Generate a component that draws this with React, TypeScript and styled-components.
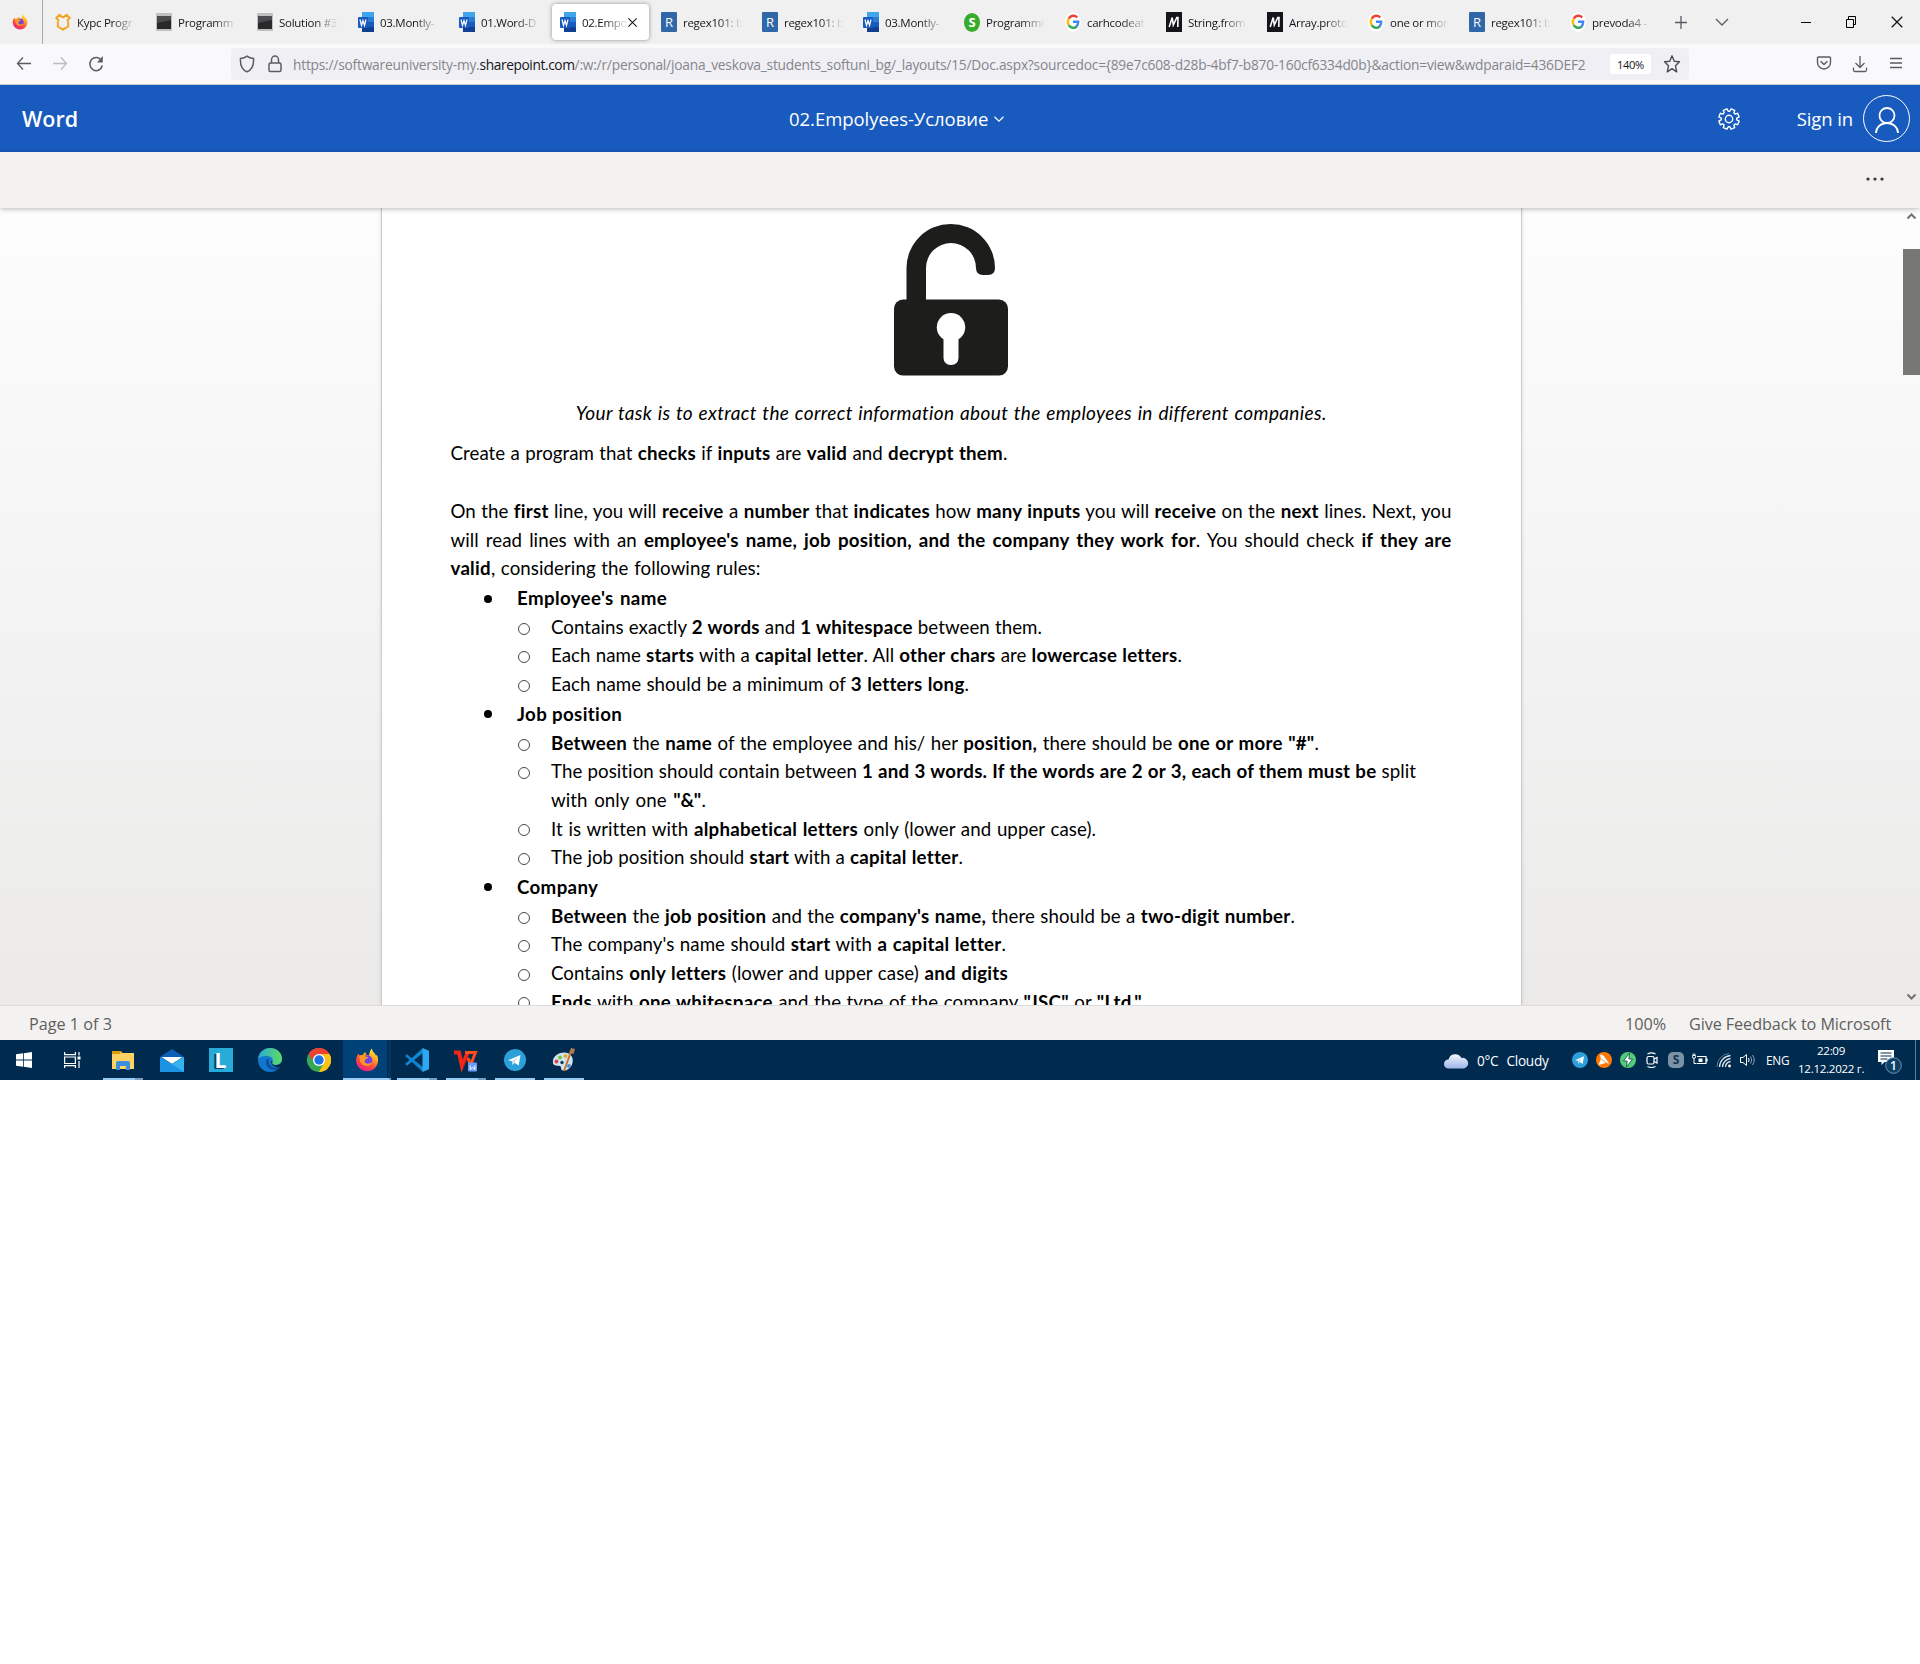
import React from "react";
import styled, { createGlobalStyle, css } from "styled-components";

const GlobalStyle = createGlobalStyle`
  * { box-sizing: border-box; }
  html, body { margin: 0; padding: 0; background: #fff; }
  body { font-family: "Open Sans", "Noto Sans", sans-serif; overflow: hidden; }
  svg { display: block; flex: none; }
`;

const ui = css`
  font-family: "Open Sans", "Noto Sans", sans-serif;
  white-space: nowrap;
`;

const Screen = styled.div`
  width: 1920px;
  height: 1664px;
  display: flex;
  flex-direction: column;
  background: #fff;
  overflow: hidden;
`;

/* ---------- browser chrome ---------- */

const TabStrip = styled.div`
  height: 44px;
  display: flex;
  align-items: center;
  background: #f0f0f0;
`;

const PinnedTab = styled.div`
  width: 43px;
  height: 44px;
  padding-left: 12px;
  margin-right: 2px;
  display: flex;
  align-items: center;
  border-right: 1px solid #a9a9aa;
`;

const Tab = styled.div<{ $active?: boolean }>`
  width: 97px;
  height: 36px;
  margin: 0 2px;
  padding-left: 8px;
  display: flex;
  align-items: center;
  gap: 6px;
  border-radius: 4px;
  background: ${(p) => (p.$active ? "#fff" : "transparent")};
  box-shadow: ${(p) => (p.$active ? "0 0 4px rgba(0, 0, 0, 0.4)" : "none")};
`;

const TabTitle = styled.div<{ $short?: boolean }>`
  ${ui}
  width: ${(p) => (p.$short ? 46 : 59)}px;
  flex: none;
  overflow: hidden;
  font-size: 11.5px;
  line-height: 20px;
  padding-top: 1px;
  letter-spacing: -0.27px;
  color: #15141a;
  mask-image: linear-gradient(to left, transparent 0, #000 24px);
`;

const CloseTab = styled.div`
  margin-left: -7px;
`;

const StripButtons = styled.div`
  display: flex;
  align-items: center;
  padding-left: 12px;
  gap: 25px;
`;

const WindowButtons = styled.div`
  margin-left: auto;
  padding-right: 16px;
  display: flex;
  align-items: center;
  gap: 33px;
`;

const NavBar = styled.div`
  height: 41px;
  display: flex;
  align-items: center;
  background: #f9f9fb;
  border-bottom: 1px solid #cccccc;
`;

const NavButtons = styled.div`
  width: 231px;
  padding-left: 16px;
  display: flex;
  gap: 20px;
`;

const UrlBar = styled.div`
  width: 1458px;
  height: 32px;
  padding: 0 8px;
  display: flex;
  align-items: center;
  border-radius: 4px;
  background: #f0f0f4;
`;

const UrlIcons = styled.div`
  width: 54px;
  display: flex;
  gap: 12px;
`;

const Url = styled.div`
  ${ui}
  width: 1319px;
  padding-top: 2px;
  font-size: 13.75px;
  line-height: 24px;
  letter-spacing: -0.213px;
  color: #85858c;
  b { font-weight: 400; color: #15141a; letter-spacing: -0.4px; }
`;

const ZoomBadge = styled.div`
  ${ui}
  width: 41px;
  height: 20px;
  margin-right: 12px;
  margin-left: -1px;
  border-radius: 3px;
  background: #fff;
  color: #15141a;
  font-size: 11.2px;
  line-height: 22px;
  letter-spacing: -0.4px;
  text-align: center;
`;

const NavTools = styled.div`
  margin-left: auto;
  padding-right: 16px;
  display: flex;
  gap: 20px;
`;

/* ---------- Word header ---------- */

const WordHeader = styled.header`
  height: 67px;
  display: grid;
  grid-template-columns: 789px auto 1fr;
  align-items: center;
  background: #185abd;
  color: #fff;
`;

const Brand = styled.div`
  ${ui}
  padding-left: 22px;
  font-size: 21.5px;
  font-weight: 600;
  line-height: 30px;
`;

const DocTitle = styled.div`
  ${ui}
  display: flex;
  align-items: center;
  gap: 5px;
  font-size: 18.5px;
  line-height: 30px;
  letter-spacing: -0.04px;
`;

const Account = styled.div`
  ${ui}
  display: flex;
  align-items: center;
  justify-content: flex-end;
  padding-right: 10px;
  font-size: 18.5px;
  line-height: 30px;
  letter-spacing: -0.1px;
`;

const GearSlot = styled.div`
  margin-right: 56px;
`;

const Avatar = styled.div`
  width: 47px;
  height: 47px;
  margin-left: 10px;
  display: flex;
  align-items: center;
  justify-content: center;
  border: 1px solid #fff;
  border-radius: 50%;
`;

const Ribbon = styled.div`
  height: 56px;
  display: flex;
  align-items: center;
  justify-content: flex-end;
  padding: 0 36px 2px 0;
  background: #f3f2f1;
  box-shadow: 0 1px 5px rgba(0, 0, 0, 0.28);
  z-index: 1;
`;

/* ---------- document ---------- */

const Canvas = styled.main`
  height: 797px;
  display: flex;
  background: linear-gradient(#fdfdfd, #ebeae9);
  overflow: hidden;
`;

const Page = styled.article`
  width: 1141px;
  margin-left: 381px;
  padding: 15px 69px 0 68.5px;
  flex: none;
  background: #fff;
  border: solid #c9cccf;
  border-width: 0 1px;
  box-shadow: 0 0 4px rgba(0, 0, 0, 0.12);
  overflow: hidden;
`;

const LockFigure = styled.div`
  display: flex;
  justify-content: center;
  margin-bottom: 22.5px;
`;

const Line = styled.div<{ $w: number; $top?: number; $center?: boolean; $head?: boolean }>`
  width: ${(p) => p.$w}px;
  margin: ${(p) => p.$top ?? 0}px ${(p) => (p.$center ? "auto" : "0")} 0;
  font-family: Lato, "Liberation Sans", sans-serif;
  font-size: ${(p) => (p.$center ? 19 : 18.7)}px;
  line-height: 28.6px;
  letter-spacing: ${(p) => (p.$center ? 0.36 : 0.06)}px;
  font-style: ${(p) => (p.$center ? "italic" : "normal")};
  font-variant-ligatures: none;
  text-align: justify;
  text-align-last: justify;
  white-space: nowrap;
  color: #000;
  b { font-weight: 700; letter-spacing: ${(p) => (p.$head ? 0.36 : 0.25)}px; }
`;

const HeadingRow = styled.div`
  display: flex;
  margin-top: 1.5px;
  padding-left: 33px;
`;

const ItemRow = styled.div`
  display: flex;
  padding-left: 67px;
`;

const Marker = styled.div<{ $solid?: boolean }>`
  width: 33.5px;
  height: 28.6px;
  display: flex;
  align-items: center;
  padding-left: ${(p) => (p.$solid ? 0.5 : 0)}px;
  padding-top: ${(p) => (p.$solid ? 0 : 3)}px;
  &::before {
    content: "";
    width: ${(p) => (p.$solid ? 8 : 10)}px;
    height: ${(p) => (p.$solid ? 8 : 10)}px;
    border-radius: 50%;
    border: ${(p) => (p.$solid ? "none" : "1px solid #484848")};
    background: ${(p) => (p.$solid ? "#000" : "transparent")};
  }
`;

const Scrollbar = styled.div`
  width: 17px;
  margin-left: auto;
  display: flex;
  flex-direction: column;
  align-items: center;
  justify-content: space-between;
  padding: 4px 0 4px;
`;

const Thumb = styled.div`
  width: 17px;
  height: 126px;
  margin-top: 29px;
  margin-bottom: auto;
  background: #777775;
`;

const StatusBar = styled.footer`
  ${ui}
  height: 35px;
  padding: 2px 29px 0;
  display: flex;
  align-items: center;
  gap: 24px;
  background: #f3f2f1;
  border-top: 1px solid #dddcdb;
  color: #605e5c;
  font-size: 16.2px;
  line-height: 30px;
`;

const StatusText = styled.span<{ $w: number; $track?: number }>`
  width: ${(p) => p.$w}px;
  letter-spacing: ${(p) => p.$track ?? 0}px;
  &:first-child { margin-right: auto; }
`;

/* ---------- taskbar ---------- */

const Taskbar = styled.div`
  ${ui}
  height: 40px;
  display: flex;
  background: #002b4f;
  color: #fff;
  font-size: 13.6px;
`;

const TaskButton = styled.div<{ $run?: boolean; $multi?: boolean; $active?: boolean }>`
  width: ${(p) => (p.$active ? 48 : 40)}px;
  height: 40px;
  margin: ${(p) => (p.$active ? "0 1px 0 0" : "0 4.5px")};
  display: flex;
  align-items: center;
  justify-content: center;
  background: ${(p) => (p.$active ? "linear-gradient(to right, #004178 44px, #00294a 44px, #00294a 45px, #00355f 45px)" : "none")};
  border-bottom: 2px solid transparent;
  border-image: ${(p) =>
    p.$run
      ? `linear-gradient(to right, #99ccf5 ${p.$multi ? (p.$active ? 44 : 31) : 48}px, #7c9fbe 0) 2`
      : "none"};
  padding-top: 2px;
`;

const StartButtons = styled.div`
  width: 98px;
  padding-left: 16px;
  display: flex;
  align-items: center;
  gap: 32px;
`;

const Tray = styled.div`
  margin-left: auto;
  display: flex;
  align-items: center;
`;

const Weather = styled.div`
  display: flex;
  align-items: center;
  gap: 8px;
  width: 128px;
  letter-spacing: -0.25px;
`;

const TrayIcons = styled.div`
  display: flex;
  align-items: center;
  gap: 8px;
  width: 194px;
`;

const Language = styled.div`
  width: 32px;
  font-size: 11.8px;
  letter-spacing: -0.2px;
`;

const Clock = styled.div`
  width: 66px;
  text-align: center;
  font-size: 11.6px;
  line-height: 18px;
  letter-spacing: -0.3px;
`;

const Notifications = styled.div`
  padding: 2px 13px 0 13px;
  height: 40px;
  display: flex;
  align-items: center;
  border-right: 1px solid #5d7d97;
  margin-right: 4px;
`;

/* ---------- drawings ---------- */

const FirefoxIcon = ({ size, id }: { size: number; id: string }) => (
  <svg width={size} height={size} viewBox="0 0 24 24">
    <defs>
      <linearGradient id={id} x1="0.8" y1="0" x2="0.25" y2="1">
        <stop offset="0" stopColor="#fff44f" />
        <stop offset="0.35" stopColor="#ffa51e" />
        <stop offset="0.65" stopColor="#ff4a3d" />
        <stop offset="1" stopColor="#e8188c" />
      </linearGradient>
    </defs>
    <path fill={`url(#${id})`} d="M3.5 5.5c.2 1 .6 1.600 1.200 2 1-.5 2.200-.5 3-.3.600-1.600 1.800-2.700 3.300-3.100-.4 1-.2 2 .3 2.700 1 0 2 .2 2.700.7.300-2.900 1.200-5.400 3-7 .2 2.200 1.200 3.400 2.500 4.800.8.900 1.300 1.700 1.500 2.500.4-.2.700-.6.800-1 1 2 1.500 4.200 1.200 6.700C22.300 19.200 17.700 23.200 12 23.200S1.500 18.800 1.100 13.300C.9 10.300 1.800 7.500 3.500 5.500Z" />
    <circle cx="12.300" cy="12.200" r="5" fill="#7542e5" />
    <path fill="#ff9a1f" d="M4.500 8c2.500-1.500 5-.8 6.300.8 1.200.2 2.400.1 2.400.7 0 .9-2.600 1.200-3.300 2.500-.9 1.700.4 3.600 2.700 3.700 2 .1 3.300-1 4.500-.9-1.200 2.500-4 3.500-6.500 3C6.500 17 4 13 4.500 8Z" />
  </svg>
);

const SoftUniIcon = () => (
  <svg width="16" height="18" viewBox="0 0 16 18" fill="none" stroke="#f7a11b" strokeWidth="1.900">
    <path d="M8 4.800L4.500 1.800 1.300 4.800 4 8.200M8 4.800l3.500-3 3.200 3L12 8.200M2.800 8.500v5L8 16.600l5.200-3.100v-5" />
  </svg>
);

const ConsoleIcon = () => (
  <svg width="16" height="18" viewBox="0 0 16 18">
    <rect width="16" height="18" rx="1" fill="#bfbfbf" />
    <rect x="1" y="3" width="14" height="13" fill="#29292b" />
    <path d="M1 3h14v4L1 10Z" fill="#4b4b4d" />
  </svg>
);

const WordIcon = () => (
  <svg width="16" height="20" viewBox="0 0 16 20">
    <rect x="4" y="0" width="12" height="5" fill="#41a5ee" />
    <rect x="4" y="5" width="12" height="5" fill="#2b7cd3" />
    <rect x="4" y="10" width="12" height="5" fill="#185abd" />
    <rect x="4" y="15" width="12" height="5" fill="#103f91" />
    <rect x="0" y="5" width="10" height="11" rx="1" fill="#185abd" />
    <path d="M2 7.500l1.500 6L5 8.500l1.500 5 1.500-6" fill="none" stroke="#fff" strokeWidth="1.200" />
  </svg>
);

const LetterTile = styled.div<{ $bg: string; $round?: boolean }>`
  width: 16px;
  height: ${(p) => (p.$round ? 19 : 20)}px;
  flex: none;
  display: flex;
  align-items: center;
  justify-content: center;
  border-radius: ${(p) => (p.$round ? "50%" : "1px")};
  background: ${(p) => p.$bg};
  color: #fff;
  font: ${(p) => (p.$round ? "700" : "400")} 13px/20px "Open Sans", sans-serif;
`;

const MdnIcon = () => (
  <svg width="16" height="20" viewBox="0 0 16 20">
    <rect width="16" height="20" fill="#15141a" />
    <path d="M3.200 15L6.200 5.500 7.300 13 10.800 5.500 12 5.500 11.800 15" fill="none" stroke="#fff" strokeWidth="1.600" />
  </svg>
);

const GoogleIcon = () => (
  <svg width="16" height="20" viewBox="0 0 16 20">
    <ellipse cx="8" cy="10" rx="8" ry="10" fill="#fff" />
    <g fill="none" strokeWidth="2.400">
      <path d="M12.200 5.500A5.500 6.200 0 0 0 3.700 6.600" stroke="#ea4335" />
      <path d="M3.700 6.600A6.500 6.500 0 0 0 3.700 13.200" stroke="#fbbc05" />
      <path d="M3.700 13.200a5.500 6 0 0 0 8 1.300" stroke="#34a853" />
      <path d="M8 9.800h5.200q0 3.200-1.900 5" stroke="#4285f4" />
    </g>
  </svg>
);

const stroke = { fill: "none", stroke: "currentColor" } as const;

const PlusIcon = () => (
  <svg width="16" height="16" viewBox="0 0 16 16" {...stroke} color="#5b5b66"><path d="M2 8.500h12M8 2v13" strokeWidth="1.300" /></svg>
);
const ChevronDown = ({ size, color, weight = 1.300 }: { size: number; color: string; weight?: number }) => (
  <svg width={size} height={size} viewBox="0 0 16 16" {...stroke} color={color}><path d="M2 5l6 6 6-6" strokeWidth={weight} /></svg>
);
const MinimizeIcon = () => (
  <svg width="12" height="14" {...stroke} color="#000"><path d="M1 7.500h10" /></svg>
);
const RestoreIcon = () => (
  <svg width="12" height="14" {...stroke} color="#000"><path d="M1.500 4.500h7v8h-7zM3.500 4.500v-3h7v8h-2" /></svg>
);
const CloseIcon = ({ size }: { size: number }) => (
  <svg width={size} height={size} viewBox="0 0 12 12" {...stroke} color="#111"><path d="M1.500 1.500l9 9M10.500 1.500l-9 9" strokeWidth="1.100" /></svg>
);
const BackIcon = () => (
  <svg width="16" height="16" viewBox="0 0 16 16" {...stroke} color="#5b5b66"><path d="M15 8.500H1.500M7 2.500L1.500 8.500 7 14.500" strokeWidth="1.300" /></svg>
);
const ForwardIcon = () => (
  <svg width="16" height="16" viewBox="0 0 16 16" {...stroke} color="#bcbcc2"><path d="M1 8.500h13.500M9 2.500l5.500 6L9 14.500" strokeWidth="1.300" /></svg>
);
const ReloadIcon = () => (
  <svg width="16" height="18" viewBox="0 0 16 18" {...stroke} color="#5b5b66">
    <path d="M13.500 5.500A6.300 6.600 0 1 0 14.300 10.500" strokeWidth="1.500" /><path d="M14.800 1v6.500H9Z" fill="currentColor" stroke="none" />
  </svg>
);
const ShieldIcon = () => (
  <svg width="16" height="18" viewBox="0 0 16 18" {...stroke} color="#5b5b66"><path d="M8 1.200C6 2.800 3.800 3.300 1.500 3.500 1 10 3.500 15 8 16.800 12.500 15 15 10 14.500 3.500 12.200 3.300 10 2.800 8 1.200Z" strokeWidth="1.500" /></svg>
);
const PadlockIcon = () => (
  <svg width="16" height="18" viewBox="0 0 16 18" {...stroke} color="#5b5b66"><rect x="2" y="8" width="12" height="8.500" rx="1.500" strokeWidth="1.500" /><path d="M4.500 8V5a3.500 4 0 0 1 7 0v3" strokeWidth="1.500" /></svg>
);
const StarIcon = () => (
  <svg width="18" height="20" viewBox="0 0 18 20" {...stroke} color="#4b4b55"><path d="M9 1.800l2.200 5.400 5.300.5-4 4.100 1.200 6L9 14.700l-4.700 3.100 1.200-6-4-4.100 5.300-.5Z" strokeWidth="1.400" strokeLinejoin="round" /></svg>
);
const PocketIcon = () => (
  <svg width="16" height="16" viewBox="0 0 16 16" {...stroke} color="#5b5b66"><path d="M2.500 2h11q1 0 1 1v4.500a6.500 6.500 0 0 1-13 0V3q0-1 1-1Z" strokeWidth="1.400" /><path d="M4.500 6.200L8 9.500l3.500-3.300" strokeWidth="1.500" /></svg>
);
const DownloadIcon = () => (
  <svg width="16" height="18" viewBox="0 0 16 18" {...stroke} color="#5b5b66"><path d="M8 1v11.500M3.500 8L8 12.500 12.500 8M1.500 12.500v2.500q0 1.500 1.500 1.500h10q1.500 0 1.500-1.500v-2.500" strokeWidth="1.300" /></svg>
);
const MenuIcon = () => (
  <svg width="16" height="16" viewBox="0 0 16 16" {...stroke} color="#5b5b66"><path d="M2 3.500h12M2 8h12M2 12.500h12" strokeWidth="1.300" /></svg>
);

const gearPath = (() => {
  const pts: string[] = [];
  for (let i = 0; i < 8; i++) {
    const a = (i * Math.PI) / 4 - Math.PI / 2 + Math.PI / 8;
    [[-0.29, 7.8], [-0.19, 10.4], [0.19, 10.4], [0.29, 7.8]].forEach(([d, r]) => {
      pts.push(`${(12 + r * Math.cos(a + d)).toFixed(2)} ${(12 + r * Math.sin(a + d)).toFixed(2)}`);
    });
  }
  return `M${pts.join("L")}Z`;
})();

const GearIcon = () => (
  <svg width="24" height="24" viewBox="0 0 24 24" {...stroke} strokeWidth="1.400" strokeLinejoin="round"><path d={gearPath} /><circle cx="12" cy="12" r="3.700" /></svg>
);
const PersonIcon = () => (
  <svg width="26" height="28" viewBox="0 0 26 28" {...stroke} strokeWidth="1.800"><circle cx="13" cy="10.500" r="7.500" /><path d="M2 28a11 10 0 0 1 22 0" /></svg>
);
const DotsIcon = () => (
  <svg width="18" height="6" viewBox="0 0 18 6" fill="#333"><circle cx="2" cy="3" r="1.600" /><circle cx="9" cy="3" r="1.600" /><circle cx="16" cy="3" r="1.600" /></svg>
);
const ScrollArrow = ({ up }: { up?: boolean }) => (
  <svg width="11" height="8" viewBox="0 0 11 8" fill="none" stroke="#72716f" strokeWidth="2"><path d={up ? "M1.500 6.500L5.500 2.500 9.500 6.500" : "M1.500 1.500L5.500 5.500 9.500 1.500"} /></svg>
);

const LockDrawing = () => (
  <svg width="116" height="153" viewBox="0 0 116 153" fill="#1d1d1b">
    <rect x="1" y="76.600" width="114" height="76" rx="9" />
    <path d="M13.500 80V45a44.250 44 0 0 1 88.500 0v0q0 7-7 7h-5q-7 0-7-7a25 25 0 0 0-50 0V80Z" />
    <circle cx="58" cy="104.300" r="14.200" fill="#fff" />
    <rect x="50.500" y="108.500" width="15" height="33.500" rx="7" fill="#fff" />
  </svg>
);

const WindowsIcon = () => (
  <svg width="16" height="16" viewBox="0 0 16 16" fill="#fff"><path d="M0 2.300L7 1.300V7.600H0ZM7.800 1.200L16 0v7.600H7.800ZM0 8.400h7v6.300L0 13.700ZM7.800 8.400H16V16l-8.200-1.200Z" /></svg>
);
const TaskViewIcon = () => (
  <svg width="17" height="16" viewBox="0 0 17 16" {...stroke} color="#fff" strokeWidth="1.200"><path d="M.6 0v2.600h10.800V0M.6 5h10.800v6.500H.6zM.6 16v-2.400h10.800V16M15 0v3.500M15 9v7" /><path d="M13.500 4.500h3v3h-3z" fill="#fff" stroke="none" /></svg>
);
const FolderIcon = () => (
  <svg width="22" height="19" viewBox="0 0 22 19"><path d="M0 0h9l1.500 2H0Z" fill="#d99a0b" /><path d="M0 1h9l1.500 1H22v16H0Z" fill="#ffd263" /><path d="M0 0h8.500v3H0Z" fill="#dc9d0a" /><path d="M4 19v-7q0-2 2-2h10q2 0 2 2v7h-4v-4H8v4Z" fill="#3b8fdd" /></svg>
);
const MailIcon = () => (
  <svg width="24" height="23" viewBox="0 0 24 23"><path d="M0 8L12 0l12 8-4 4H4Z" fill="#0a5eb8" /><path d="M1.500 8h21L12 15Z" fill="#fff" /><path d="M0 8l12 7 12-7v15H0Z" fill="#1c93e3" /><path d="M24 8v15L6 11.500l6 3.500Z" fill="#34b3f0" /></svg>
);
const LTile = styled.div`
  width: 24px;
  height: 24px;
  display: flex;
  align-items: center;
  justify-content: center;
  background: #27acd9;
  color: #fff;
  text-shadow: -2px 1px 0 #14395f;
  font: 700 21px/24px "Open Sans", sans-serif;
`;
const EdgeIcon = () => (
  <svg width="24" height="24" viewBox="0 0 24 24">
    <defs><linearGradient id="edgeTop" x1="0" x2="1"><stop offset="0" stopColor="#2aa8dc" /><stop offset="1" stopColor="#5fdc60" /></linearGradient></defs>
    <circle cx="12" cy="12" r="12" fill="#1277cc" />
    <path d="M0 11C1 4 6 0 12 0c7 0 12 5 12 10.500 0 4-3 6.500-6.500 6.500-3 0-4.500-1.200-3.500-2.500 2.500-3-1-7-6-6.500C4 8.200 1 9 0 11Z" fill="url(#edgeTop)" />
    <path d="M9 11c-3 5 1 11 8 11 2 0 4-1 5.500-3-2 .8-4 1-6 .5C12 18.500 10 15 11 11.500Z" fill="#0b4fa0" />
    <path d="M14.500 14.500c-1 1.300.5 2.500 3.500 2.500 3 0 5-1.500 6-3.500V19c-5 1.500-11-.5-11-6 1 0 1.500.7 1.500 1.500Z" fill="#002b4f" />
  </svg>
);
const ChromeIcon = () => (
  <svg width="24" height="24" viewBox="0 0 24 24">
    <path d="M12 12L1.600 6A12 12 0 0 1 22.400 6Z" fill="#ea4335" /><path d="M12 12L22.400 6A12 12 0 0 1 12 24Z" fill="#fbc116" /><path d="M12 12v12A12 12 0 0 1 1.600 6Z" fill="#34a853" />
    <path d="M12 6h10.400L17 15Z" fill="#fbc116" /><path d="M6.800 15L1.600 6 12 6Z" fill="#34a853" /><path d="M1.600 6A12 12 0 0 1 22.400 6H12L7 9.500 5 12Z" fill="#ea4335" /><path d="M17.200 15L12 24l-5-9Z" fill="#34a853" /><path d="M17.200 15L12 24A12 12 0 0 0 22.400 6H17Z" fill="#fbc116" />
    <circle cx="12" cy="12" r="6" fill="#fff" /><circle cx="12" cy="12" r="4.700" fill="#1a73e8" />
  </svg>
);
const VsCodeIcon = () => (
  <svg width="24" height="24" viewBox="0 0 24 24"><path d="M0 8l2-1.800L18 19v5Z" fill="#0f7fca" /><path d="M0 16l2 1.800L18 5V0Z" fill="#0f88d2" /><path d="M17.500 0L24 2.800v18.400L17.500 24Z" fill="#2ea8f3" /></svg>
);
const WpsIcon = () => (
  <svg width="24" height="24" viewBox="0 0 24 24" fill="none">
    <path d="M0 4.500h5L8 18 13.500 5" stroke="#f3261a" strokeWidth="4" />
    <path d="M11 4.500h10.500L16.500 17l-2.500-7" stroke="#ff4d1c" strokeWidth="3" />
    <path d="M9 19l4-9.500" stroke="#c51b10" strokeWidth="1" />
    <rect x="14" y="14.500" width="9" height="9" rx="1" fill="#6a9cf8" /><path d="M16.200 17.500v4l2.300-2 2.300 2v-4" stroke="#fff" />
  </svg>
);
const TelegramIcon = ({ size }: { size: number }) => (
  <svg width={size} height={size} viewBox="0 0 24 24"><circle cx="12" cy="12" r="12" fill="#2ca0da" /><path d="M4.500 12.200L18 6.500 16 18l-4.500-3-2 2.500-.7-4.200Z" fill="#fff" /><path d="M8.800 13.300L15 9l-4 5.500-1.500 3Z" fill="#b8d8ea" /></svg>
);
const PaintIcon = () => (
  <svg width="24" height="24" viewBox="0 0 24 24"><path d="M1 15C0 9 6 4.500 12 4.500S22 9 20.500 15 14 23 11 22.500c-3-.5-1-3.500-3-4.500S2 19 1 15Z" fill="#cfe4f3" /><circle cx="4.500" cy="13.500" r="1.900" fill="#e0413a" /><circle cx="8" cy="9.500" r="1.900" fill="#76c33b" /><circle cx="13.500" cy="8" r="1.900" fill="#eea52c" /><circle cx="10" cy="14.500" r="1.700" fill="#14395f" /><circle cx="17" cy="18" r="2" fill="#4c8fd3" /><path d="M12 23l6.500-18" stroke="#c9752c" strokeWidth="2" /><path d="M17 5l2-5 4 1-1.500 5Z" fill="#b07b4c" /></svg>
);
const CloudIcon = () => (
  <svg width="25" height="17" viewBox="0 0 25 17">
    <defs><linearGradient id="cloudFill" x2="0" y2="1"><stop offset="0" stopColor="#f2f5fd" /><stop offset="1" stopColor="#9eb6ea" /></linearGradient></defs>
    <path d="M4.500 16.500a4.500 4.500 0 0 1 0-9A7 7 0 0 1 17.500 6 5.300 5.300 0 0 1 20 16.500Z" fill="url(#cloudFill)" />
  </svg>
);
const AvastIcon = () => (
  <svg width="16" height="16" viewBox="0 0 16 16"><circle cx="8" cy="8" r="8" fill="#ff7800" /><path d="M4.200 2.500q2-.5 4 2L13.500 12q-3-2-5.500-.5L2.500 13 4.800 7Z" fill="#fff" /><path d="M5 7l7 5" stroke="#ff9b40" /></svg>
);
const BoltIcon = () => (
  <svg width="16" height="16" viewBox="0 0 16 16"><circle cx="8" cy="8" r="8" fill="#4fce75" /><path d="M9.500 1L3.500 9h3.700L6.500 15 12.500 7H8.800Z" fill="#fff" stroke="#173f55" strokeWidth=".8" /></svg>
);
const CameraIcon = () => (
  <svg width="16" height="16" viewBox="0 0 16 16" {...stroke} color="#fff" strokeWidth="1.200"><rect x="3" y="4.500" width="7" height="7.500" rx="1.500" /><path d="M10 7l3-1.500v5.500l-3-1.500M3.500 2Q7.500-.2 11.500 2M3.500 14.500q4 2 8 0" /></svg>
);
const SkypeTile = styled.div`
  width: 16px;
  height: 16px;
  border-radius: 5px;
  background: #7b93a7;
  color: #17334c;
  font: 700 12px/16px "Open Sans", sans-serif;
  text-align: center;
`;
const BatteryIcon = () => (
  <svg width="16" height="16" viewBox="0 0 16 16" {...stroke} color="#fff"><path d="M5 4.500h9v7H4.500M15 6.500v3" strokeWidth="1.200" /><path d="M6.500 6.500h4v3.500h-4z" fill="#fff" stroke="none" /><path d="M.5 3.500v1q0 2 1.500 2t1.500-2v-1ZM2 6.500v5h2M1.200 1.500v2M2.800 1.500v2" /></svg>
);
const WifiIcon = () => (
  <svg width="16" height="16" viewBox="0 0 16 16" {...stroke} color="#dfe6ec"><path d="M3.500 15A12 12 0 0 1 14.500 3.500M6.500 15a9 9 0 0 1 8-8.500M9.500 15a6 6 0 0 1 5-5.500" strokeWidth="1.300" /><path d="M1 15A13 13 0 0 1 13 1.500" stroke="#5b7a94" /><circle cx="13.500" cy="14" r="1.400" fill="#fff" stroke="none" /></svg>
);
const VolumeIcon = () => (
  <svg width="16" height="16" viewBox="0 0 16 16" {...stroke} color="#fff"><path d="M.5 5.500H3L6.500 2.500v11L3 10.500H.5Z" /><path d="M8.500 6q1 2 0 4" /><path d="M10.500 4.500q2.500 3.500 0 7M12.500 3q3.500 5 0 10" stroke="#8da3b5" /></svg>
);
const NoticeIcon = () => (
  <svg width="25" height="25" viewBox="0 0 25 25"><path d="M1 1h16v12H7.500L4.500 16v-3H1Z" fill="#fff" /><path d="M3.500 4h11M3.500 7h11M3.500 10h7" stroke="#002b4f" /><circle cx="16.500" cy="16.500" r="7.800" fill="#0d4268" stroke="#6a93b0" /><text x="16.500" y="21" fill="#fff" fontSize="12" fontFamily="Open Sans, sans-serif" fontWeight="600" textAnchor="middle">1</text></svg>
);

/* ---------- content ---------- */

const tabIcons: Record<string, React.ReactNode> = {
  softuni: <SoftUniIcon />,
  console: <ConsoleIcon />,
  word: <WordIcon />,
  regex: <LetterTile $bg="#3067a8">R</LetterTile>,
  s: <LetterTile $bg="#37ab2a" $round>S</LetterTile>,
  google: <GoogleIcon />,
  mdn: <MdnIcon />,
};

const tabs: { icon: string; title: string; active?: boolean }[] = [
  { icon: "softuni", title: "Курс Progr" },
  { icon: "console", title: "Programm" },
  { icon: "console", title: "Solution #3" },
  { icon: "word", title: "03.Montly-" },
  { icon: "word", title: "01.Word-D" },
  { icon: "word", title: "02.Empo", active: true },
  { icon: "regex", title: "regex101: b" },
  { icon: "regex", title: "regex101: b" },
  { icon: "word", title: "03.Montly-" },
  { icon: "s", title: "Programmi" },
  { icon: "google", title: "carhcodeat" },
  { icon: "mdn", title: "String.from" },
  { icon: "mdn", title: "Array.proto" },
  { icon: "google", title: "one or mor" },
  { icon: "regex", title: "regex101: b" },
  { icon: "google", title: "prevoda4 -" },
];

type Entry = { kind: "text" | "head" | "item" | "cont"; text: string; w: number };

const entries: Entry[] = [
  { kind: "text", w: 1001, text: "On the **first** line, you will **receive** a **number** that **indicates** how **many inputs** you will **receive** on the **next** lines. Next, you" },
  { kind: "text", w: 1001, text: "will read lines with an **employee's name, job position, and the company they work for**. You should check **if they are**" },
  { kind: "text", w: 310, text: "**valid**, considering the following rules:" },
  { kind: "head", w: 150, text: "**Employee's name**" },
  { kind: "item", w: 491, text: "Contains exactly **2 words** and **1 whitespace** between them." },
  { kind: "item", w: 631, text: "Each name **starts** with a **capital letter**. All **other chars** are **lowercase letters**." },
  { kind: "item", w: 418, text: "Each name should be a minimum of **3 letters long**." },
  { kind: "head", w: 103, text: "**Job position**" },
  { kind: "item", w: 768, text: "**Between** the **name** of the employee and his/ her **position,** there should be **one or more \"#\"**." },
  { kind: "item", w: 865, text: "The position should contain between **1 and 3 words. If the words are 2 or 3, each of them must be** split" },
  { kind: "cont", w: 155, text: "with only one **\"&\"**." },
  { kind: "item", w: 545, text: "It is written with **alphabetical letters** only (lower and upper case)." },
  { kind: "item", w: 412, text: "The job position should **start** with a **capital letter**." },
  { kind: "head", w: 81, text: "**Company**" },
  { kind: "item", w: 744, text: "**Between** the **job position** and the **company's name,** there should be a **two-digit number**." },
  { kind: "item", w: 455, text: "The company's name should **start** with **a capital letter**." },
  { kind: "item", w: 457, text: "Contains **only letters** (lower and upper case) **and digits**" },
  { kind: "item", w: 591, text: "**Ends** with **one whitespace** and the type of the company **\"JSC\"** or **\"Ltd.\"**" },
];

const rich = (text: string) =>
  text.split("**").map((part, i) => (i % 2 ? <b key={i}>{part}</b> : <React.Fragment key={i}>{part}</React.Fragment>));

const ContinuationSpace = styled.div`
  width: 33.5px;
`;

const EntryLine = ({ entry }: { entry: Entry }) => {
  const line = <Line $w={entry.w} $head={entry.kind === "head"}>{rich(entry.text)}</Line>;
  if (entry.kind === "text") return line;
  if (entry.kind === "head") return <HeadingRow><Marker $solid />{line}</HeadingRow>;
  return <ItemRow>{entry.kind === "item" ? <Marker /> : <ContinuationSpace />}{line}</ItemRow>;
};

export default function App() {
  return (
    <>
      <GlobalStyle />
      <Screen>
        <TabStrip>
          <PinnedTab><FirefoxIcon size={16} id="foxTab" /></PinnedTab>
          {tabs.map((t, i) => (
            <Tab key={i} $active={t.active}>
              {tabIcons[t.icon]}
              <TabTitle $short={t.active}>{t.title}</TabTitle>
              {t.active && <CloseTab><CloseIcon size={11} /></CloseTab>}
            </Tab>
          ))}
          <StripButtons><PlusIcon /><ChevronDown size={16} color="#5b5b66" /></StripButtons>
          <WindowButtons><MinimizeIcon /><RestoreIcon /><CloseIcon size={14} /></WindowButtons>
        </TabStrip>

        <NavBar>
          <NavButtons><BackIcon /><ForwardIcon /><ReloadIcon /></NavButtons>
          <UrlBar>
            <UrlIcons><ShieldIcon /><PadlockIcon /></UrlIcons>
            <Url>https://softwareuniversity-my.<b>sharepoint.com</b>/:w:/r/personal/joana_veskova_students_softuni_bg/_layouts/15/Doc.aspx?sourcedoc=&#123;89e7c608-d28b-4bf7-b870-160cf6334d0b&#125;&amp;action=view&amp;wdparaid=436DEF2</Url>
            <ZoomBadge>140%</ZoomBadge>
            <StarIcon />
          </UrlBar>
          <NavTools><PocketIcon /><DownloadIcon /><MenuIcon /></NavTools>
        </NavBar>

        <WordHeader>
          <Brand>Word</Brand>
          <DocTitle>02.Empolyees-Условие<ChevronDown size={12} color="#fff" weight={1.6} /></DocTitle>
          <Account><GearSlot><GearIcon /></GearSlot>Sign in<Avatar><PersonIcon /></Avatar></Account>
        </WordHeader>
        <Ribbon><DotsIcon /></Ribbon>

        <Canvas>
          <Page>
            <LockFigure><LockDrawing /></LockFigure>
            <Line $w={751} $center>Your task is to extract the correct information about the employees in different companies.</Line>
            <Line $w={557} $top={12}>{rich("Create a program that **checks** if **inputs** are **valid** and **decrypt them**.")}</Line>
            <Line $w={10} $top={0.7}>&nbsp;</Line>
            {entries.map((e, i) => <EntryLine key={i} entry={e} />)}
          </Page>
          <Scrollbar><ScrollArrow up /><Thumb /><ScrollArrow /></Scrollbar>
        </Canvas>

        <StatusBar>
          <StatusText $w={84}>Page 1 of 3</StatusText>
          <StatusText $w={40}>100%</StatusText>
          <StatusText $w={202} $track={-0.08}>Give Feedback to Microsoft</StatusText>
        </StatusBar>

        <Taskbar>
          <StartButtons><WindowsIcon /><TaskViewIcon /></StartButtons>
          <TaskButton $run $multi><FolderIcon /></TaskButton>
          <TaskButton><MailIcon /></TaskButton>
          <TaskButton><LTile>L</LTile></TaskButton>
          <TaskButton><EdgeIcon /></TaskButton>
          <TaskButton><ChromeIcon /></TaskButton>
          <TaskButton $run $multi $active><FirefoxIcon size={24} id="foxTask" /></TaskButton>
          <TaskButton $run $multi><VsCodeIcon /></TaskButton>
          <TaskButton $run $multi><WpsIcon /></TaskButton>
          <TaskButton $run><TelegramIcon size={22} /></TaskButton>
          <TaskButton $run><PaintIcon /></TaskButton>
          <Tray>
            <Weather><CloudIcon /><span>0°C</span><span>Cloudy</span></Weather>
            <TrayIcons>
              <TelegramIcon size={16} /><AvastIcon /><BoltIcon /><CameraIcon /><SkypeTile>S</SkypeTile><BatteryIcon /><WifiIcon /><VolumeIcon />
            </TrayIcons>
            <Language>ENG</Language>
            <Clock>22:09<br />12.12.2022 г.</Clock>
            <Notifications><NoticeIcon /></Notifications>
          </Tray>
        </Taskbar>
      </Screen>
    </>
  );
}
